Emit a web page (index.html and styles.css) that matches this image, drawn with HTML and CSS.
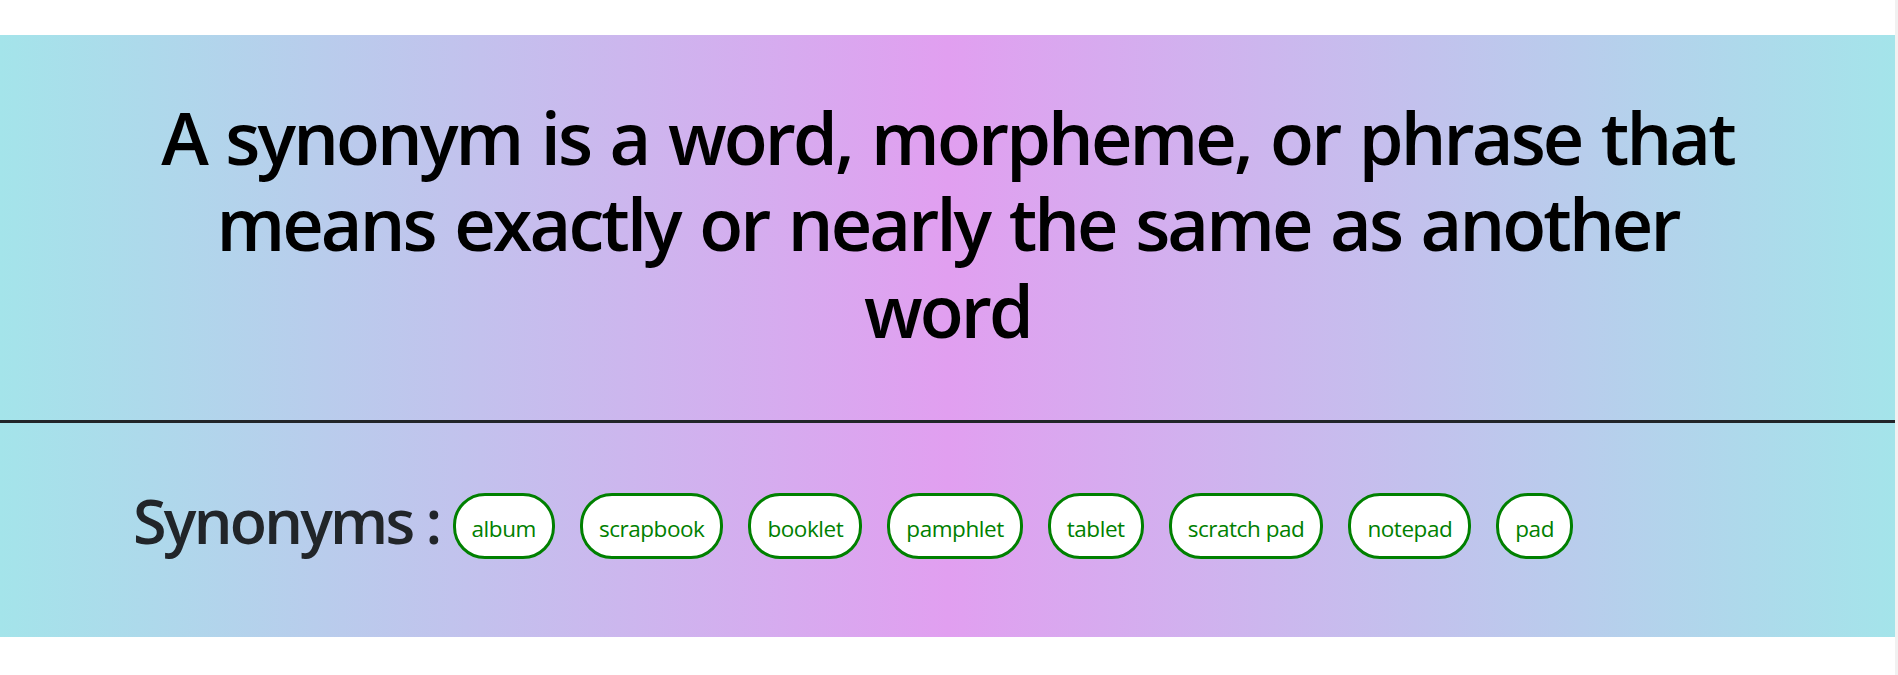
FILE: index.html
```html
<!DOCTYPE html>
<html lang="en">
<head>
<meta charset="utf-8">
<title>Synonym</title>
<link rel="stylesheet" href="styles.css">
</head>
<body>
<main class="card">
  <section class="definition">
    <h1 class="definition-text">A synonym is a word, morpheme, or phrase that means exactly or nearly the same as another word</h1>
  </section>
  <hr class="divider">
  <section class="synonyms">
    <h2 class="synonyms-label">Synonyms :</h2>
    <ul class="pill-list">
      <li class="pill">album</li>
      <li class="pill">scrapbook</li>
      <li class="pill">booklet</li>
      <li class="pill">pamphlet</li>
      <li class="pill">tablet</li>
      <li class="pill">scratch pad</li>
      <li class="pill">notepad</li>
      <li class="pill">pad</li>
    </ul>
  </section>
</main>
</body>
</html>
```
FILE: styles.css
```css
* { box-sizing: border-box; }

html, body {
  margin: 0;
  padding: 0;
  background: #ffffff;
}

body {
  font-family: "Open Sans", "Noto Sans", "Liberation Sans", sans-serif;
  color: #212529;
  min-height: 100vh;
  border-right: 3px solid #f1f1f1;
  padding-top: 35px;
}

.card {
  background: linear-gradient(90deg, #a4e4ea 0%, #e19ff0 50%, #a4e4ea 100%);
  height: 602px;
  display: flex;
  flex-direction: column;
}

.definition {
  padding-top: 59px;
  height: 385px;
}

.definition-text {
  margin: 0 auto;
  max-width: 1620px;
  text-align: center;
  font-size: 72px;
  line-height: 1.2;
  font-weight: 600;
  letter-spacing: -0.04em;
  word-spacing: 0.05em;
  color: #000000;
}

.divider {
  margin: 0;
  border: 0;
  height: 3px;
  background: #212529;
  opacity: 1;
}

.synonyms {
  flex: 1;
  display: flex;
  align-items: flex-start;
  padding: 70px 0 0 133px;
}

.synonyms-label {
  margin: -9px 13px 0 0;
  font-size: 61px;
  line-height: 1.2;
  font-weight: 600;
  letter-spacing: -0.045em;
  color: #212529;
}

.pill-list {
  list-style: none;
  margin: 0;
  padding: 0;
  display: flex;
  gap: 25px;
}

.pill {
  background: #ffffff;
  border: 3px solid #008000;
  border-radius: 32px;
  padding: 18px 16px 11px;
  font-size: 22.5px;
  line-height: 1.37;
  color: #008000;
  letter-spacing: -0.02em;
}
```
